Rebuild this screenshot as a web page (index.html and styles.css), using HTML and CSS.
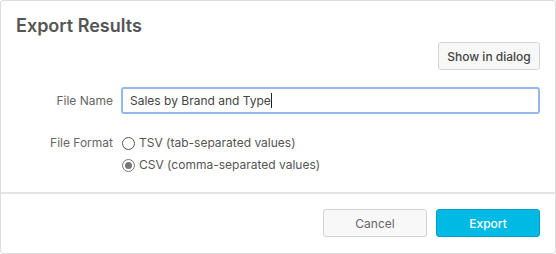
FILE: index.html
```html
<!DOCTYPE html>
<html>
<head>
<meta charset="utf-8">
<link rel="stylesheet" href="styles.css">
</head>
<body>
<div class="dialog">
  <div class="body">
    <h1 class="title">Export Results</h1>
    <div class="toolbar">
      <button class="btn">Show in dialog</button>
    </div>
    <div class="row row-name">
      <label class="label">File Name</label>
      <div class="input">Sales by Brand and Type<span class="caret"></span></div>
    </div>
    <div class="row row-format">
      <label class="label">File Format</label>
      <div class="options">
        <div class="option"><span class="radio"></span>TSV (tab-separated values)</div>
        <div class="option"><span class="radio checked"></span>CSV (comma-separated values)</div>
      </div>
    </div>
  </div>
  <div class="footer">
    <button class="btn btn-cancel">Cancel</button>
    <button class="btn btn-primary">Export</button>
  </div>
</div>
</body>
</html>
```
FILE: styles.css
```css
html, body { margin: 0; padding: 0; background: #fff; }
body { font-family: Inter, "Noto Sans", sans-serif; font-size: 12px; color: #555; }
.dialog {
  width: 556px; height: 254px; box-sizing: border-box;
  border: 1px solid #dcdcdc; border-radius: 3px;
  display: flex; flex-direction: column;
}
.body { padding: 14px 15px 0 15px; height: 193px; box-sizing: border-box; border-bottom: 2px solid #e4e4e4; }
.title { margin: 0; font-size: 18px; line-height: 22px; font-weight: 600; color: #555; padding-left: 0; }
.toolbar { display: flex; justify-content: flex-end; margin-top: 5px; }
.btn {
  font-family: inherit; font-size: 12px; color: #555; white-space: nowrap;
  background: #f7f7f7; border: 1px solid #d4d4d4; border-radius: 3px;
  height: 28px; padding: 0 8px; box-sizing: border-box; cursor: pointer;
}
.toolbar .btn { width: 102px; font-weight: 500; color: #444; }
.row { display: flex; }
.label { width: 97px; text-align: right; padding-right: 8px; color: #666; flex-shrink: 0; }
.row-name { margin-top: 17px; align-items: center; }
.input {
  flex: 1; height: 27px; box-sizing: border-box;
  border: 2px solid #94b8ea; border-radius: 3px;
  padding-left: 7px; display: flex; align-items: center; color: #444;
}
.caret { display: inline-block; width: 1px; height: 15px; background: #222; }
.row-format { margin-top: 20px; }
.row-format .label { line-height: 18px; }
.options { display: flex; flex-direction: column; gap: 4px; }
.option { display: flex; align-items: center; line-height: 18px; color: #555; }
.radio {
  width: 11px; height: 11px; border: 1px solid #555; border-radius: 50%;
  margin: 0 4px 0 1px; box-sizing: content-box; position: relative; background: #fff;
}
.radio.checked { border-color: #777; }
.radio.checked::after {
  content: ""; position: absolute; left: 2px; top: 2px; width: 7px; height: 7px;
  border-radius: 50%; background: #777;
}
.footer { display: flex; justify-content: flex-end; gap: 9px; padding: 15px 15px 0 0; }
.footer .btn { width: 104px; }
.btn-cancel { background: #f8f8f8; color: #666; }
.btn-primary { background: #00b9e4; border-color: #0a9cc0; color: #fff; font-weight: 500; }
```
